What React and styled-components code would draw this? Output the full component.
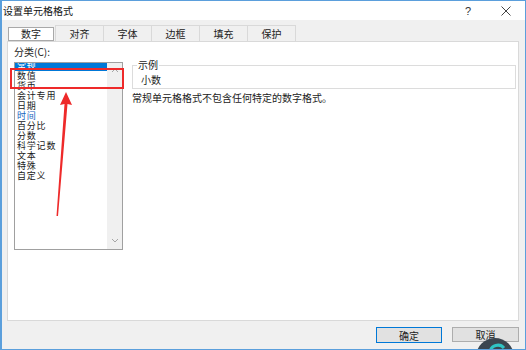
import React from "react";
import styled, { createGlobalStyle } from "styled-components";

const GlobalStyle = createGlobalStyle`
  html, body { margin: 0; padding: 0; background: #fff; }
  body { font-family: "Noto Sans CJK SC", "Noto Sans", sans-serif; }
  * { box-sizing: border-box; }
`;

const Window = styled.div`
  position: relative;
  width: 526px;
  height: 350px;
  border: 1px solid #5b9fdc;
  border-left-width: 2px;
  display: flex;
  flex-direction: column;
  overflow: hidden;
  background: #f0f0f0;
  color: #1a1a1a;
  font-size: 10px;
`;

const TitleBar = styled.div`
  height: 19px;
  flex: none;
  background: #fff;
  display: flex;
  align-items: center;
  padding: 0 9px 0 1px;
`;

const Title = styled.div`
  font-size: 10px;
  line-height: 12px;
  color: #111;
`;

const TitleButton = styled.div`
  width: 20px;
  height: 19px;
  display: flex;
  align-items: center;
  justify-content: center;
  color: #333;
  font-family: "Liberation Sans", sans-serif;
  font-size: 11px;
  margin-left: ${(p) => p.$gap || 0}px;
`;

const Body = styled.div`
  flex: 1;
  display: flex;
  flex-direction: column;
  padding: 5px 6px 0 5px;
`;

const TabBar = styled.div`
  display: flex;
  align-items: flex-end;
  height: 16px;
  padding-left: 1px;
`;

const Tab = styled.div`
  width: ${(p) => (p.$active ? 46 : 49)}px;
  height: ${(p) => (p.$active ? 14 : 16)}px;
  margin-left: ${(p) => (p.$first ? 0 : p.$afterActive ? 1 : -1)}px;
  display: flex;
  align-items: center;
  justify-content: center;
  font-size: 10px;
  line-height: 10px;
  background: ${(p) => (p.$active ? "#fff" : "#f0f0f0")};
  border: 1px solid ${(p) => (p.$active ? "#a9a9a9" : "#d9d9d9")};
  border-bottom: ${(p) => (p.$active ? "1px solid #a9a9a9" : "none")};
  color: #222;
`;

const Panel = styled.div`
  height: 280px;
  background: #fff;
  border: 1px solid #d9d9d9;
  display: flex;
  gap: 9px;
  padding: 5px 2px 0 6px;
`;

const LeftCol = styled.div`
  width: 109px;
  display: flex;
  flex-direction: column;
`;

const FieldLabel = styled.div`
  height: 10px;
  line-height: 10px;
  margin-bottom: 5px;
  color: #222;
`;

const ListBox = styled.div`
  height: 188px;
  border: 1px solid #a0a0a0;
  display: flex;
  overflow: hidden;
`;

const ListItems = styled.div`
  flex: 1;
  margin-top: -2px;
  display: flex;
  flex-direction: column;
`;

const ListItem = styled.div`
  height: 10px;
  line-height: 10px;
  padding-left: 2px;
  font-size: 9px;
  letter-spacing: 0.8px;
  white-space: nowrap;
  background: ${(p) => (p.$selected ? "#0078d7" : "transparent")};
  color: ${(p) => (p.$selected ? "#fff" : p.$link ? "#1464c0" : "#1a1a1a")};
`;

const Scrollbar = styled.div`
  width: 15px;
  background: #f0f0f0;
  display: flex;
  flex-direction: column;
  justify-content: space-between;
  align-items: center;
  padding: 5px 0 6px;
`;

const RightCol = styled.div`
  flex: 1;
  padding-top: 12px;
  display: flex;
  flex-direction: column;
`;

const SampleBox = styled.fieldset`
  margin: 0;
  padding: 0 8px 3px;
  border: 1px solid #dcdcdc;
  min-width: 0;
  width: 384px;
`;

const SampleLegend = styled.legend`
  padding: 0 1px;
  margin-left: -4px;
  font-size: 10px;
  line-height: 12px;
  color: #222;
`;

const SampleValue = styled.div`
  margin-top: 4px;
  height: 10px;
  line-height: 10px;
  color: #222;
`;

const Description = styled.div`
  margin-top: 4px;
  line-height: 10px;
  color: #222;
`;

const Footer = styled.div`
  display: flex;
  justify-content: flex-end;
  gap: 10px;
  padding-top: 6px;
`;

const Button = styled.div`
  width: ${(p) => (p.$primary ? 66 : 67)}px;
  height: ${(p) => (p.$primary ? 16 : 15)}px;
  background: #e1e1e1;
  border: 1px solid ${(p) => (p.$primary ? "#0078d7" : "#adadad")};
  display: flex;
  align-items: center;
  justify-content: center;
  font-size: 10px;
  color: #222;
`;

const RedBox = styled.div`
  position: absolute;
  left: 8px;
  top: 67px;
  width: 114px;
  height: 21px;
  border: 2px solid #ee2a2a;
  pointer-events: none;
`;

const ArrowSvg = styled.svg`
  position: absolute;
  left: 48px;
  top: 87px;
  pointer-events: none;
`;

const Badge = styled.svg`
  position: absolute;
  left: 472px;
  top: 335px;
`;

const Chevron = ({ up }) => (
  <svg width="8" height="5" viewBox="0 0 8 5">
    <path
      d={up ? "M1 4 L4 1 L7 4" : "M1 1 L4 4 L7 1"}
      fill="none"
      stroke="#a6a6a6"
      strokeWidth="1"
    />
  </svg>
);

const items = [
  { t: "常规", selected: true },
  { t: "数值" },
  { t: "货币" },
  { t: "会计专用" },
  { t: "日期" },
  { t: "时间", link: true },
  { t: "百分比" },
  { t: "分数" },
  { t: "科学记数" },
  { t: "文本" },
  { t: "特殊" },
  { t: "自定义" },
];

const tabs = ["数字", "对齐", "字体", "边框", "填充", "保护"];

export default function App() {
  return (
    <>
      <GlobalStyle />
      <Window>
        <TitleBar>
          <Title>设置单元格格式</Title>
          <TitleButton style={{ marginLeft: "auto" }}>?</TitleButton>
          <TitleButton $gap={18}>
            <svg width="10" height="10" viewBox="0 0 10 10">
              <path d="M0.5 0.5 L9.5 9.5 M9.5 0.5 L0.5 9.5" stroke="#444" strokeWidth="1" />
            </svg>
          </TitleButton>
        </TitleBar>
        <Body>
          <TabBar>
            {tabs.map((t, i) => (
              <Tab key={t} $active={i === 0} $first={i === 0} $afterActive={i === 1}>
                {t}
              </Tab>
            ))}
          </TabBar>
          <Panel>
            <LeftCol>
              <FieldLabel>分类(C):</FieldLabel>
              <ListBox>
                <ListItems>
                  {items.map((it) => (
                    <ListItem key={it.t} $selected={it.selected} $link={it.link}>
                      {it.t}
                    </ListItem>
                  ))}
                </ListItems>
                <Scrollbar>
                  <Chevron up />
                  <Chevron />
                </Scrollbar>
              </ListBox>
            </LeftCol>
            <RightCol>
              <SampleBox>
                <SampleLegend>示例</SampleLegend>
                <SampleValue>小数</SampleValue>
              </SampleBox>
              <Description>常规单元格格式不包含任何特定的数字格式。</Description>
            </RightCol>
          </Panel>
          <Footer>
            <Button $primary>确定</Button>
            <Button>取消</Button>
          </Footer>
        </Body>
        <RedBox />
        <ArrowSvg width="26" height="132" viewBox="0 0 26 132">
          <polygon
            points="16,4 22,17 17.5,16 8,128 6.5,128 14.5,16 10,17"
            fill="#ee2a2a"
          />
        </ArrowSvg>
        <Badge width="42" height="16" viewBox="0 0 42 16">
          <circle cx="21" cy="21" r="19" fill="#3b4650" />
          <path d="M16 16 A8 8 0 0 1 30 12" fill="none" stroke="#2fc4c4" strokeWidth="3" />
        </Badge>
      </Window>
    </>
  );
}
